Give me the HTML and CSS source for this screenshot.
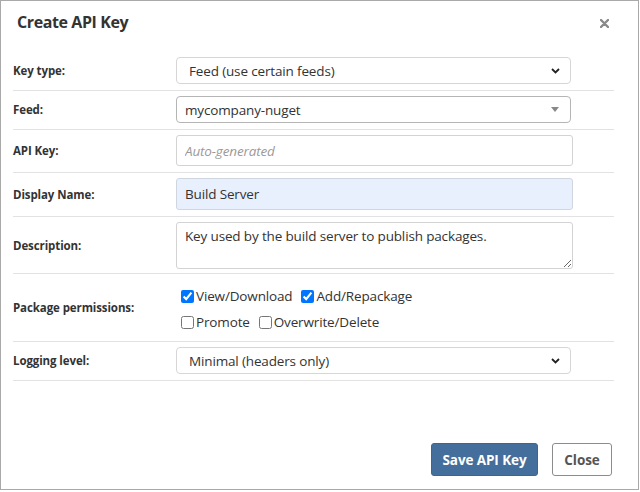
FILE: index.html
```html
<!DOCTYPE html>
<html>
<head>
<meta charset="utf-8">
<link rel="stylesheet" href="styles.css">
</head>
<body>
<div class="dialog">
  <div class="header">
    <span class="title">Create API Key</span>
    <svg class="close-x" width="9" height="9" viewBox="0 0 9 9"><path d="M1 1L8 8M8 1L1 8" stroke="#8a8a8a" stroke-width="2.4" stroke-linecap="round"/></svg>
  </div>
  <div class="body">
    <div class="row r-select first">
      <div class="label">Key type:</div>
      <div class="control">
        <div class="select native"><span>Feed (use certain feeds)</span>
          <svg width="9" height="6" viewBox="0 0 9 6"><path d="M1 1L4.5 4.5L8 1" fill="none" stroke="#222" stroke-width="1.8"/></svg>
        </div>
      </div>
    </div>
    <div class="row r-select2">
      <div class="label">Feed:</div>
      <div class="control">
        <div class="select s2"><span>mycompany-nuget</span>
          <svg width="8" height="5" viewBox="0 0 8 5"><path d="M0 0H8L4 5Z" fill="#888"/></svg>
        </div>
      </div>
    </div>
    <div class="row r-input">
      <div class="label">API Key:</div>
      <div class="control"><input class="text" type="text" placeholder="Auto-generated"></div>
    </div>
    <div class="row r-input2">
      <div class="label">Display Name:</div>
      <div class="control"><input class="text filled" type="text" value="Build Server"></div>
    </div>
    <div class="row r-area">
      <div class="label">Description:</div>
      <div class="control"><textarea class="area">Key used by the build server to publish packages.</textarea></div>
    </div>
    <div class="row r-checks">
      <div class="label">Package permissions:</div>
      <div class="control checks">
        <div class="check-line">
          <label class="chk"><input type="checkbox" checked><span>View/Download</span></label>
          <label class="chk"><input type="checkbox" checked><span>Add/Repackage</span></label>
        </div>
        <div class="check-line">
          <label class="chk"><input type="checkbox"><span>Promote</span></label>
          <label class="chk"><input type="checkbox"><span>Overwrite/Delete</span></label>
        </div>
      </div>
    </div>
    <div class="row r-select">
      <div class="label">Logging level:</div>
      <div class="control">
        <div class="select native"><span>Minimal (headers only)</span>
          <svg width="9" height="6" viewBox="0 0 9 6"><path d="M1 1L4.5 4.5L8 1" fill="none" stroke="#222" stroke-width="1.8"/></svg>
        </div>
      </div>
    </div>
  </div>
  <div class="footer">
    <button class="btn primary">Save API Key</button>
    <button class="btn secondary">Close</button>
  </div>
</div>
</body>
</html>
```
FILE: styles.css
```css
html, body {
  margin: 0;
  padding: 0;
  background: #fff;
}
body {
  font-family: "Open Sans", "Noto Sans", sans-serif;
  color: #333;
}
.dialog {
  width: 639px;
  height: 490px;
  box-sizing: border-box;
  border: 1px solid #a9a9a9;
  display: flex;
  flex-direction: column;
}
.header {
  height: 50px;
  box-sizing: border-box;
  padding: 9px 29px 0 16px;
  display: flex;
  justify-content: space-between;
  align-items: flex-start;
}
.title {
  font-size: 16px;
  font-weight: 700;
  line-height: 24px;
  color: #333;
  letter-spacing: -0.4px;
}
.close-x {
  margin-top: 9px;
}
.body {
  padding: 0 24px 0 12px;
}
.row {
  display: flex;
  align-items: center;
  border-bottom: 1px solid #e2e2e2;
  padding: 5px 0 6px;
}
.label {
  width: 163px;
  flex: none;
  font-size: 11.5px;
  font-weight: 700;
  color: #333;
  letter-spacing: -0.1px;
}
.control {
  width: 397px;
}
.select {
  box-sizing: border-box;
  display: flex;
  align-items: center;
  justify-content: space-between;
  border-radius: 4px;
  font-size: 13.5px;
  color: #333;
  letter-spacing: -0.15px;
}
.select.native {
  width: 395px;
  height: 27px;
  border: 1px solid #d6d6d6;
  padding: 0 10px 0 12px;
}
.first {
  padding-top: 6px;
}
.select.s2 {
  width: 395px;
  height: 27px;
  border: 1px solid #b5b5b5;
  padding: 0 11px 0 8px;
}
.text {
  box-sizing: border-box;
  width: 397px;
  height: 31px;
  border: 1px solid #d3d3d3;
  border-radius: 3px;
  padding: 0 8px;
  font-family: "Open Sans", "Noto Sans", sans-serif;
  font-size: 13.5px;
  color: #333;
  letter-spacing: -0.15px;
  margin: 0;
  display: block;
}
.r-input2 .text {
  height: 32px;
}
.text::placeholder {
  color: #9a9a9a;
  font-style: italic;
}
.text.filled {
  background: #e8f0fe;
  border-color: #d0d6e0;
}
.area {
  box-sizing: border-box;
  width: 397px;
  height: 47px;
  border: 1px solid #d3d3d3;
  border-radius: 3px;
  padding: 4px 8px;
  font-family: "Open Sans", "Noto Sans", sans-serif;
  font-size: 13.5px;
  line-height: 18px;
  color: #333;
  letter-spacing: -0.15px;
  margin: 0;
  display: block;
  resize: vertical;
}
.r-area {
  padding-bottom: 4px;
}
.checks {
  padding-top: 4px;
  height: 56px;
  box-sizing: border-box;
}
.check-line {
  display: flex;
  align-items: center;
  height: 26px;
}
.chk {
  display: flex;
  align-items: center;
  font-size: 13.5px;
  color: #333;
  letter-spacing: -0.15px;
  margin-right: 4px;
}
.chk input {
  margin: 0 2px 0 5px;
  width: 13px;
  height: 13px;
}
.footer {
  margin-top: auto;
  display: flex;
  justify-content: flex-end;
  gap: 14px;
  padding: 0 26px 13px 0;
}
.btn {
  height: 33px;
  border-radius: 3px;
  font-family: "Open Sans", "Noto Sans", sans-serif;
  font-size: 13.5px;
  font-weight: 700;
  letter-spacing: -0.1px;
  white-space: nowrap;
  padding: 0;
}
.primary {
  background: #446e9b;
  border: 1px solid #3d6590;
  color: #fff;
  width: 107px;
}
.secondary {
  background: #fff;
  border: 1px solid #8c8c8c;
  color: #555;
  width: 60px;
}
```
